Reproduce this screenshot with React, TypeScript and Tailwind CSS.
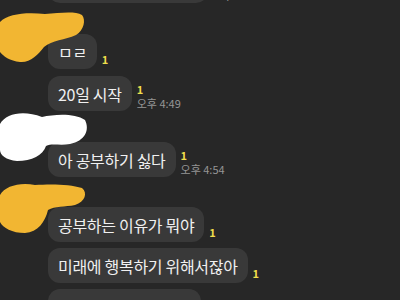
import React from "react";

type Msg = {
  text: string;
  read?: string;
  time?: string;
  mt: string;
};

const MESSAGES: Msg[] = [
  { text: "내일부터 진짜 할 거야", time: "오후 4:49", mt: "mt-[-32px]" },
  { text: "ㅁㄹ", read: "1", mt: "mt-[31px]" },
  { text: "20일 시작", read: "1", time: "오후 4:49", mt: "mt-[7px]" },
  { text: "아 공부하기 싫다", read: "1", time: "오후 4:54", mt: "mt-[31px]" },
  { text: "공부하는 이유가 뭐야", read: "1", mt: "mt-[30px]" },
  { text: "미래에 행복하기 위해서잖아", read: "1", mt: "mt-[6px]" },
  { text: "지금 행복하면 안 돼?", mt: "mt-[6px]" },
];

const Bubble = ({ text, read, time, mt }: Msg) => (
  <div className={`flex flex-row items-end ${mt}`}>
    <div className="h-[35px] px-[10px] flex items-center rounded-[12px] bg-[#393939] text-[16px] tracking-[-0.3px] text-[#f0f0f0] whitespace-nowrap">
      {text}
    </div>
    <div className="flex flex-col items-start ml-[5px] pb-[2px]">
      {read && (
        <span className="text-[11px] leading-[11px] font-bold text-[#efde4c] mb-[2px]">
          {read}
        </span>
      )}
      {time && (
        <span className="text-[11px] leading-[12px] text-[#959595] whitespace-nowrap">
          {time}
        </span>
      )}
    </div>
  </div>
);

// scribbles that hide the profile pictures
const Blobs = () => (
  <svg
    className="absolute inset-0 pointer-events-none"
    width="400"
    height="300"
    viewBox="0 0 400 300"
  >
    <path
      d="M0 22 C8 14 25 12 45 14 C60 13 75 11 82 15 C86 20 84 30 76 35 C65 40 52 40 44 47 C38 55 30 63 20 62 C10 61 3 56 0 52 Z"
      fill="#f2b632"
    />
    <path
      d="M0 124 C6 113 24 110 42 117 C55 114 75 113 85 120 C90 130 85 141 70 144 C60 146 52 143 46 146 C43 155 32 161 17 161 C6 160 0 155 0 150 Z"
      fill="#ffffff"
    />
    <path
      d="M0 195 C5 186 20 182 35 185 C50 184 70 184 82 188 C88 193 85 202 75 205 C65 207 55 206 48 210 C45 222 38 232 25 233 C12 233 3 228 0 222 Z"
      fill="#f2b632"
    />
  </svg>
);

export default function App() {
  return (
    <div
      className="relative w-[400px] h-[300px] overflow-hidden bg-[#272727]"
      style={{ fontFamily: '"Noto Sans CJK KR", "Noto Sans", sans-serif' }}
    >
      <div className="flex flex-col pl-[48px]">
        {MESSAGES.map((m, i) => (
          <Bubble key={i} {...m} />
        ))}
      </div>
      <Blobs />
    </div>
  );
}
